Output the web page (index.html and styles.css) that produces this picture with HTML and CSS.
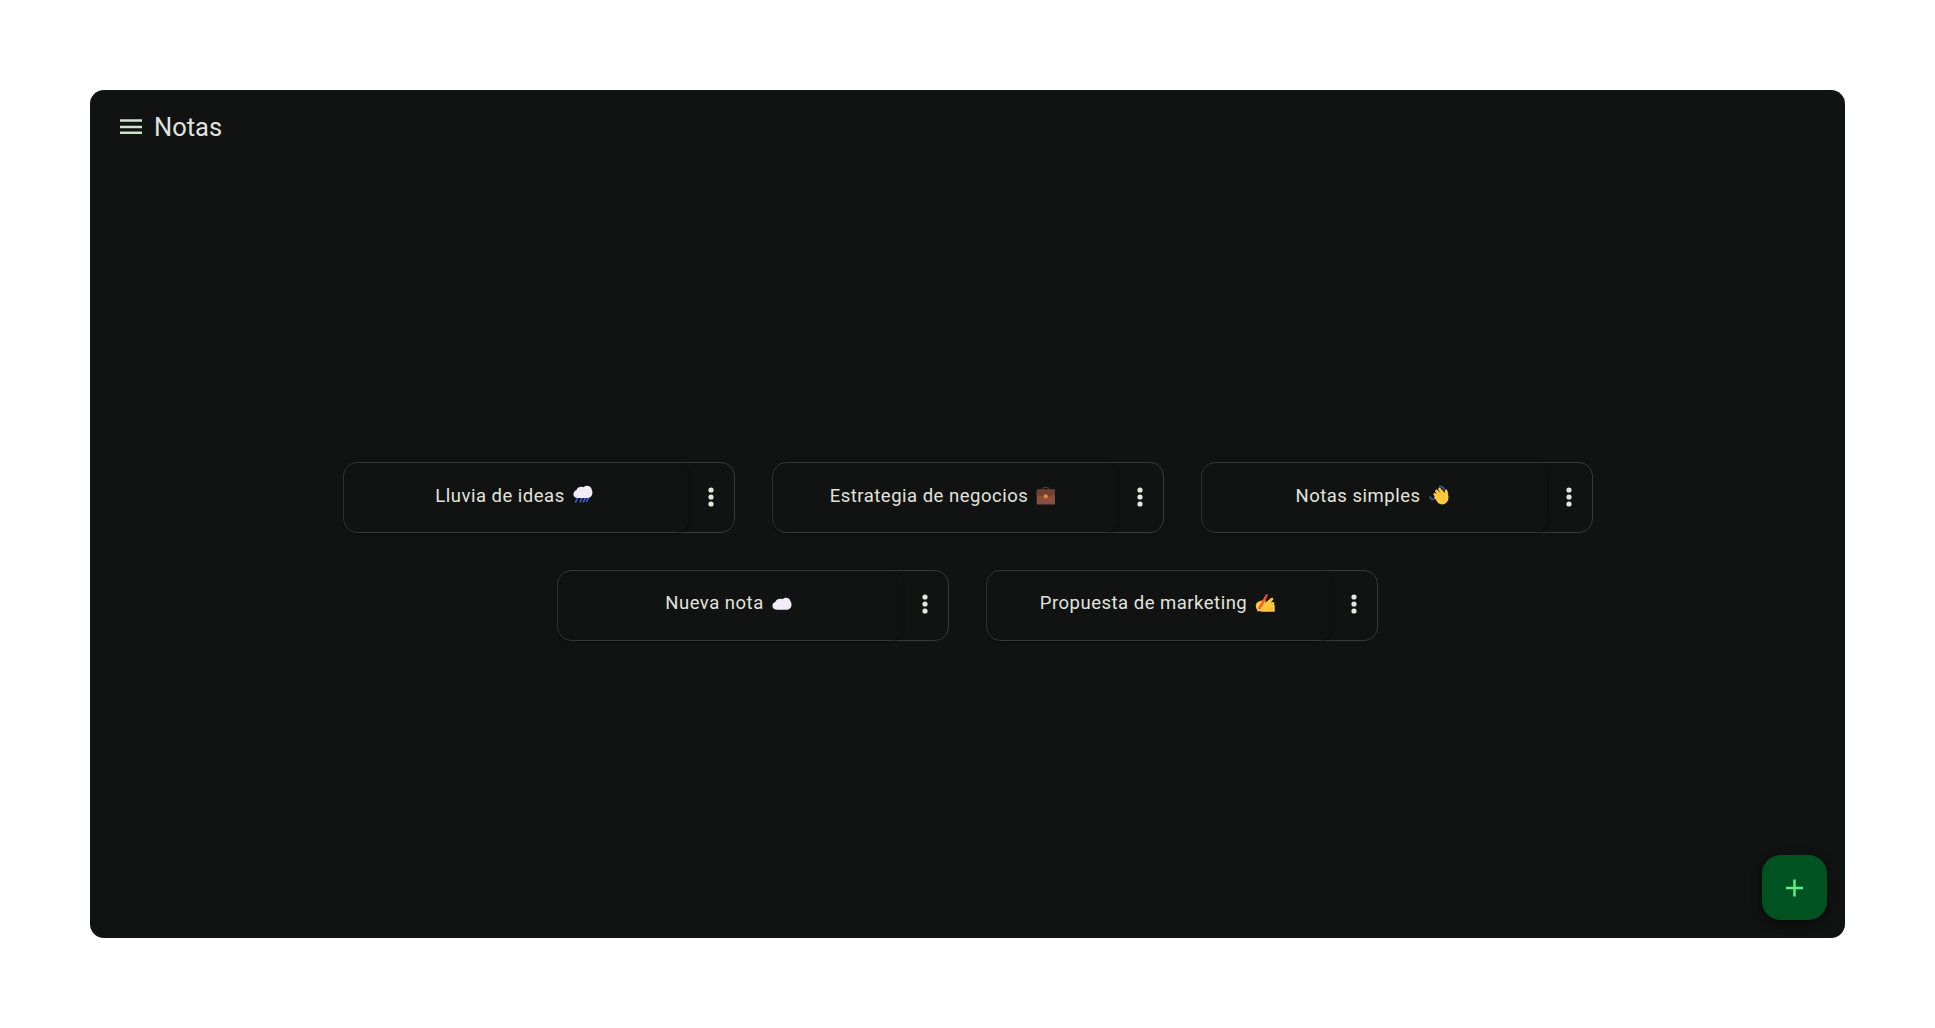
FILE: index.html
```html
<!DOCTYPE html>
<html lang="es">
<head>
<meta charset="utf-8">
<title>Notas</title>
<link rel="stylesheet" href="styles.css">
</head>
<body>
<main class="app">
  <header class="topbar">
    <svg class="menu-icon" viewBox="0 0 22 16"><path d="M0 1.500h22M0 8h22M0 13.700h22"/></svg>
    <h1 class="title">Notas</h1>
  </header>
  <section class="notes">
    <article class="note">
      <div class="note-open"><span class="label">Lluvia de ideas</span>
        <svg class="emoji" viewBox="0 0 20 20"><path d="M4.700 12.500l-2.300 5M9.200 12.500l-2.300 5M12.500 12.500l-2.300 5M15.700 12l-2.300 5" stroke="#3f5fd8" stroke-width="1.700"/><path d="M5 13C-.8 13-.8 6.500 3.500 5 4.500 2 8 1.300 10.300 2.300 13-.6 18.200.5 18.800 4.800 20.300 7.500 19.200 12.500 15 13z" fill="#f2ebf8"/></svg>
      </div>
      <svg class="more" viewBox="0 0 6 20"><circle cx="3" cy="3" r="2.600"/><circle cx="3" cy="10" r="2.600"/><circle cx="3" cy="17" r="2.600"/></svg>
    </article>
    <article class="note">
      <div class="note-open"><span class="label">Estrategia de negocios</span>
        <svg class="emoji" viewBox="0 0 20 20"><path d="M7 5V3.500Q7 2.500 8.200 2.500h3Q12.500 2.500 12.500 3.500V5" fill="none" stroke="#55392f" stroke-width="1.200"/><rect x=".7" y="4.500" width="18.300" height="15" rx="1" fill="#87503f"/><path d="M.7 5.500q0-1 1-1h16.300q1 0 1 1V10l-9 2-9.300-2z" fill="#70412f"/><circle cx="9.800" cy="11.300" r="2.100" fill="#e58a3c"/></svg>
      </div>
      <svg class="more" viewBox="0 0 6 20"><circle cx="3" cy="3" r="2.600"/><circle cx="3" cy="10" r="2.600"/><circle cx="3" cy="17" r="2.600"/></svg>
    </article>
    <article class="note">
      <div class="note-open"><span class="label">Notas simples</span>
        <svg class="emoji" viewBox="0 0 20 20"><path d="M11 1.500q3-.2 4 3M1.300 12q.3 2.500 3.200 2.500" fill="none" stroke="#34528c" stroke-width="2" stroke-linecap="round"/><path d="M7.500 6l5 6M10.500 4l4.500 6M5.800 9.300l5 5M6.500 12.500l5 4" stroke="#ffc83d" stroke-width="2.800" stroke-linecap="round"/><path d="M7 9l6-4 3 3q-.5-4 1.100-3.700 1.700.7 1.900 4.700 1.500 6-1.300 8.500-4 3.500-8.700.5L6.500 14z" fill="#ffc83d"/><path d="M7.800 8.500l2.200 2.500M10.800 6.800l2 2.500" stroke="#d99a2b" stroke-width=".4"/></svg>
      </div>
      <svg class="more" viewBox="0 0 6 20"><circle cx="3" cy="3" r="2.600"/><circle cx="3" cy="10" r="2.600"/><circle cx="3" cy="17" r="2.600"/></svg>
    </article>
    <article class="note">
      <div class="note-open"><span class="label">Nueva nota</span>
        <svg class="emoji" viewBox="0 0 20 20"><path d="M4.700 16.700C-.8 16.700-.8 10 3.500 8.700 4.500 6 8 5.300 10.300 6.300 13 3.400 18 4.500 18.700 8.800 20.500 11.500 19.500 16.500 15.500 16.700z" fill="#f2ebf8"/></svg>
      </div>
      <svg class="more" viewBox="0 0 6 20"><circle cx="3" cy="3" r="2.600"/><circle cx="3" cy="10" r="2.600"/><circle cx="3" cy="17" r="2.600"/></svg>
    </article>
    <article class="note">
      <div class="note-open"><span class="label">Propuesta de marketing</span>
        <svg class="emoji" viewBox="0 0 20 20"><path d="M.8 12Q1.500 9 5 8L9 7l2 .5-1 2.500 6-5q2.500-.8 2.300 1.200l-2.300 3.300 2.500-.5q2 1 0 2.800h1.200v7H7.500L3.500 18Q.3 15.500.8 12z" fill="#ffc83d"/><path d="M3.800 16.500L11.300 3" stroke="#f05b35" stroke-width="2.500"/><path d="M10.900 3.700L12.300 1.300" stroke="#d8323c" stroke-width="2.500"/><path d="M2.600 15.500l2.500 1.500-2.700 2z" fill="#f3c6a5"/><path d="M10 10.500l-3 3.500M13 16h5" stroke="#d99a2b" stroke-width=".5"/></svg>
      </div>
      <svg class="more" viewBox="0 0 6 20"><circle cx="3" cy="3" r="2.600"/><circle cx="3" cy="10" r="2.600"/><circle cx="3" cy="17" r="2.600"/></svg>
    </article>
  </section>
  <button class="fab" aria-label="Nueva nota"><svg viewBox="0 0 18 18"><path d="M8.500 .5v17M0 9h17"/></svg></button>
</main>
</body>
</html>
```
FILE: styles.css
```css
* { box-sizing: border-box; }
body {
  margin: 0;
  height: 1028px;
  padding: 90px;
  background: #fff;
  font-family: Roboto, "Liberation Sans", sans-serif;
  color: #e1e3df;
}
.app {
  position: relative;
  height: 848px;
  border-radius: 14px;
  background: #101311;
  overflow: hidden;
}
.topbar {
  height: 74px;
  padding-left: 30px;
  display: flex;
  align-items: center;
  gap: 12px;
}
.menu-icon { width: 22px; height: 16px; stroke: #cfe3cf; stroke-width: 2.6; }
.title { margin: 0; font-size: 25.5px; font-weight: 400; line-height: 32px; }
.notes {
  padding: 298px 200px 0;
  display: flex;
  flex-wrap: wrap;
  justify-content: center;
  gap: 36.5px 37px;
}
.note {
  width: 392px;
  height: 71px;
  border: 1px solid #353b37;
  border-radius: 14px;
  display: flex;
  align-items: center;
}
.note-open {
  width: 345px;
  height: 71px;
  padding: 0 4px 4px 0;
  border-radius: 14px;
  box-shadow: 0 1px 3px rgba(0, 0, 0, .45);
  display: flex;
  align-items: center;
  justify-content: center;
  gap: 8px;
}
.label { font-size: 18.5px; letter-spacing: .5px; line-height: 28px; white-space: nowrap; }
.emoji { width: 20px; height: 20px; margin-bottom: 1px; }
.more { width: 6px; height: 20px; margin: 0 0 2px 19px; fill: #dfeadb; }
.fab {
  position: absolute;
  right: 18px;
  bottom: 18px;
  width: 65px;
  height: 65px;
  padding: 0;
  border: 0;
  border-radius: 18.5px;
  background: #005321;
  box-shadow: 0 3px 8px 2px rgba(0, 0, 0, .35);
  display: flex;
  align-items: center;
  justify-content: center;
}
.fab svg { width: 18px; height: 18px; stroke: #62ee81; stroke-width: 2.5; }
```
